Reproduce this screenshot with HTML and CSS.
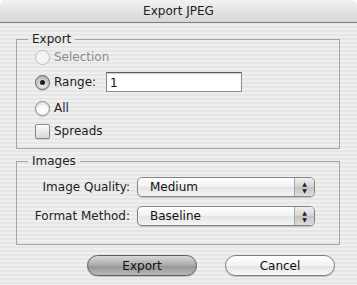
FILE: index.html
```html
<!DOCTYPE html>
<html lang="en">
<head>
  <meta charset="UTF-8">
  <title>Export JPEG</title>
  <link rel="stylesheet" href="styles.css">
</head>
<body>
  <div class="window">
    <div class="titlebar">Export JPEG</div>

    <div class="content">
      <fieldset class="group export-group">
        <legend>Export</legend>
        <div class="option disabled row-1"><span class="radio"></span>Selection</div>
        <div class="option row-2">
          <span class="radio checked"></span>Range:
          <input type="text" class="range-input" value="1">
        </div>
        <div class="option row-3"><span class="radio"></span>All</div>
        <div class="option"><span class="checkbox"></span>Spreads</div>
      </fieldset>

      <fieldset class="group images-group">
        <legend>Images</legend>
        <div class="field-grid">
          <span class="field-label">Image Quality:</span>
          <div class="popup">
            <span class="popup-value">Medium</span>
            <span class="popup-arrows"><span>&#9650;</span><span>&#9660;</span></span>
          </div>

          <span class="field-label">Format Method:</span>
          <div class="popup">
            <span class="popup-value">Baseline</span>
            <span class="popup-arrows"><span>&#9650;</span><span>&#9660;</span></span>
          </div>
        </div>
      </fieldset>

      <div class="buttons">
        <button class="btn default">Export</button>
        <button class="btn">Cancel</button>
      </div>
    </div>
  </div>
</body>
</html>
```

FILE: styles.css
```css
body {
  margin: 0;
  background-color: #fff;
  font-family: "DejaVu Sans", sans-serif;
  font-size: 12px;
  color: #1c1c1c;
}

.window {
  width: 357px;
  height: 285px;
  border-radius: 6px 6px 0 0;
  overflow: hidden;
  background: repeating-linear-gradient(to bottom, #efefef 0 2px, #e6e6e6 2px 4px);
}

.titlebar {
  height: 22px;
  line-height: 23px;
  text-align: center;
  font-size: 12px;
  color: #222;
  background: linear-gradient(to bottom, #f2f2f2, #d6d6d6);
  border-bottom: 1px solid #7e7e7e;
}

.content {
  padding: 8px 17px 0 16px;
}

.group {
  margin: 0;
  border: 1px solid #a4a4a4;
  min-width: 0;
}

.group legend {
  padding: 0 4px;
  line-height: 16px;
  color: #222;
}

.export-group {
  padding: 0 17px 7px 18px;
}

.export-group legend {
  margin-left: -7px;
}

.option {
  display: flex;
  align-items: center;
  height: 20px;
}

.row-1 { margin-bottom: 5px; }
.row-2 { margin-bottom: 6px; }
.row-3 { margin-bottom: 3px; }

.disabled {
  color: #8e8e8e;
}

.radio {
  width: 13px;
  height: 13px;
  border: 1px solid #8a8a8a;
  border-radius: 50%;
  margin-right: 4px;
  background: radial-gradient(circle at 50% 70%, #fff 0%, #fafafa 45%, #cfcfcf 100%);
  box-shadow: 0 1px 1px rgba(0,0,0,0.15);
  display: flex;
  align-items: center;
  justify-content: center;
}

.disabled .radio {
  border-color: #bcbcbc;
  background: #f4f4f4;
  box-shadow: none;
}

.radio.checked {
  background: radial-gradient(circle at 50% 70%, #eee 0%, #c4c4c4 60%, #9c9c9c 100%);
  border-color: #6a6a6a;
}

.radio.checked::after {
  content: "";
  width: 5px;
  height: 5px;
  border-radius: 50%;
  background: #1e1e1e;
}

.checkbox {
  width: 13px;
  height: 13px;
  border: 1px solid #8a8a8a;
  border-radius: 2px;
  margin-right: 4px;
  background: linear-gradient(to bottom, #fdfdfd, #d8d8d8);
  box-shadow: 0 1px 1px rgba(0,0,0,0.12);
}

.range-input {
  width: 136px;
  height: 20px;
  box-sizing: border-box;
  margin-left: 10px;
  padding: 1px 3px 0;
  border: 1px solid #8c8c8c;
  border-top-color: #5e5e5e;
  background: #fff;
  box-shadow: inset 0 1px 1px rgba(0,0,0,0.2);
  font-family: "DejaVu Sans", sans-serif;
  font-size: 12px;
  color: #111;
  outline: none;
}

.images-group {
  margin-top: 4px;
  padding: 0 12px 18px 12px;
}

.images-group legend {
  margin-left: -1px;
}

.field-grid {
  display: grid;
  grid-template-columns: 101px 178px;
  column-gap: 7px;
  row-gap: 9px;
  align-items: center;
  margin-top: 8px;
}

.field-label {
  text-align: right;
  white-space: nowrap;
  color: #222;
}

.popup {
  display: flex;
  height: 20px;
  box-sizing: border-box;
  border: 1px solid #858585;
  border-radius: 5px;
  background: linear-gradient(to bottom, #ffffff 0%, #f1f1f1 50%, #e4e4e4 51%, #f4f4f4 100%);
  box-shadow: 0 1px 1px rgba(0,0,0,0.18);
  overflow: hidden;
}

.popup-value {
  flex: 1;
  padding-left: 12px;
  line-height: 18px;
  color: #111;
}

.popup-arrows {
  width: 19px;
  border-left: 1px solid #a8a8a8;
  background: linear-gradient(to bottom, #f0f0f0 0%, #d4d4d4 50%, #c4c4c4 51%, #dedede 100%);
  display: flex;
  flex-direction: column;
  align-items: center;
  justify-content: center;
  font-size: 6px;
  line-height: 7px;
  color: #222;
}

.buttons {
  display: flex;
  justify-content: flex-end;
  gap: 28px;
  margin-top: 10px;
  padding-right: 5px;
}

.btn {
  width: 110px;
  height: 21px;
  border: 1px solid #7c7c7c;
  border-radius: 11px;
  background: linear-gradient(to bottom, #ffffff 0%, #f3f3f3 50%, #e2e2e2 51%, #f8f8f8 100%);
  box-shadow: 0 1px 1px rgba(0,0,0,0.2);
  font-family: "DejaVu Sans", sans-serif;
  font-size: 12px;
  color: #111;
  padding: 0;
}

.btn.default {
  border-color: #5e5e5e;
  background: linear-gradient(to bottom, #d8d8d8 0%, #a9a9a9 50%, #949494 51%, #b9b9b9 100%);
}
```
